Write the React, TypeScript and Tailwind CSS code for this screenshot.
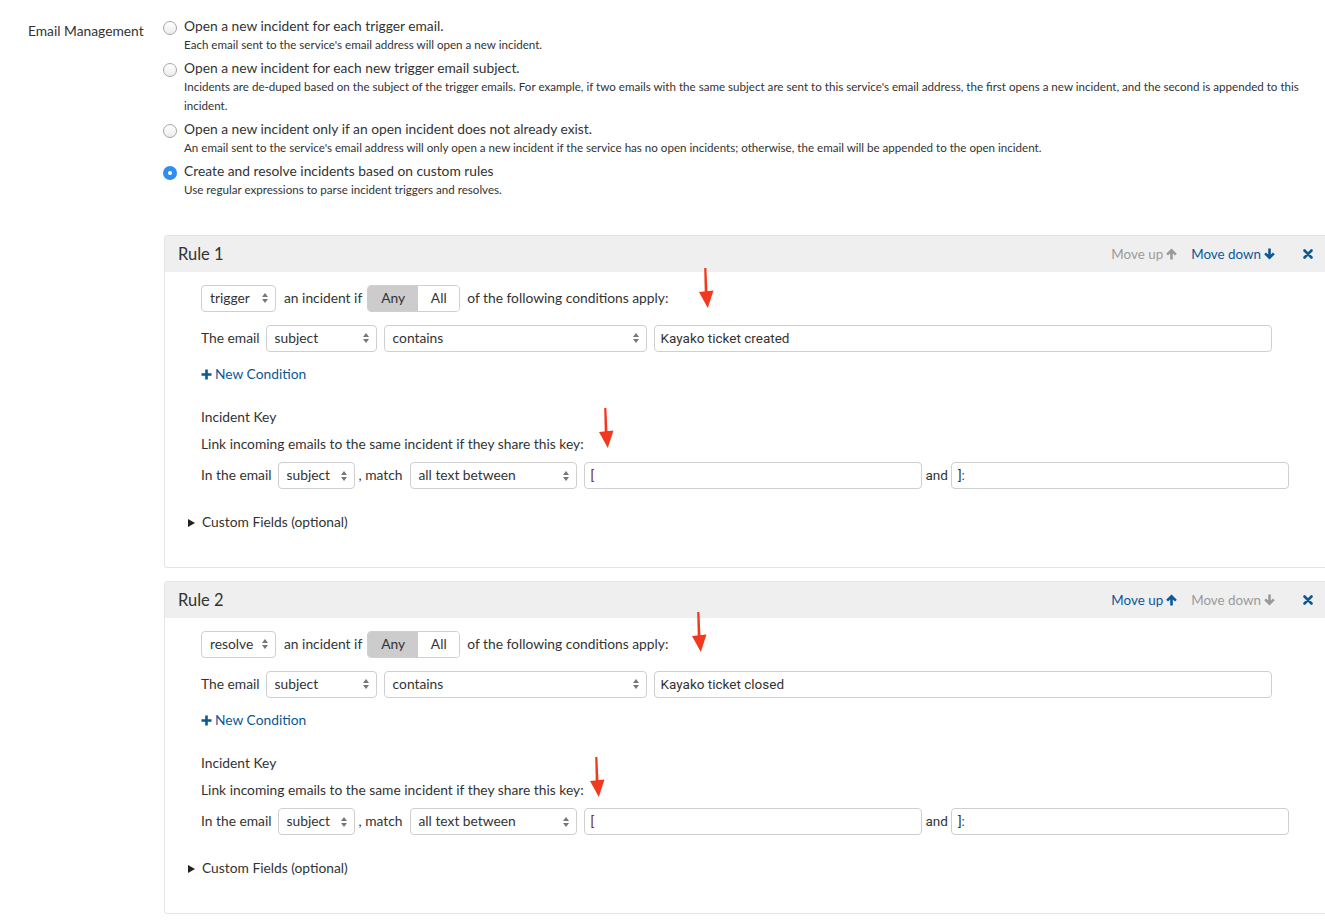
const options = [
  {
    title: 'Open a new incident for each trigger email.',
    desc: "Each email sent to the service's email address will open a new incident.",
  },
  {
    title: 'Open a new incident for each new trigger email subject.',
    desc: "Incidents are de-duped based on the subject of the trigger emails. For example, if two emails with the same subject are sent to this service's email address, the first opens a new incident, and the second is appended to this incident.",
  },
  {
    title: 'Open a new incident only if an open incident does not already exist.',
    desc: "An email sent to the service's email address will only open a new incident if the service has no open incidents; otherwise, the email will be appended to the open incident.",
  },
  {
    title: 'Create and resolve incidents based on custom rules',
    desc: 'Use regular expressions to parse incident triggers and resolves.',
    checked: true,
  },
];

const ArrowUp = () => (
  <svg width="11" height="12" viewBox="0 0 11 12" className="shrink-0">
    <path d="M5.5 0.5 L10.8 5.8 L9 7.6 L6.8 5.4 V11.5 H4.2 V5.4 L2 7.6 L0.2 5.8 Z" fill="currentColor" />
  </svg>
);

const ArrowDown = () => (
  <svg width="11" height="12" viewBox="0 0 11 12" className="shrink-0">
    <path d="M5.5 11.5 L10.8 6.2 L9 4.4 L6.8 6.6 V0.5 H4.2 V6.6 L2 4.4 L0.2 6.2 Z" fill="currentColor" />
  </svg>
);

const Cross = () => (
  <svg width="10" height="10" viewBox="0 0 10 10" className="shrink-0">
    <path d="M1.5 1.5 L8.5 8.5 M8.5 1.5 L1.5 8.5" stroke="currentColor" strokeWidth="2.6" strokeLinecap="round" />
  </svg>
);

const Plus = () => (
  <svg width="11" height="11" viewBox="0 0 11 11" className="shrink-0">
    <path d="M5.5 0.5 V10.5 M0.5 5.5 H10.5" stroke="currentColor" strokeWidth="2.6" />
  </svg>
);

const Radio = ({ checked }: { checked?: boolean }) =>
  checked ? (
    <span className="mt-[5px] flex h-[14px] w-[14px] shrink-0 items-center justify-center rounded-full bg-[#2f8ef3]">
      <span className="h-[4px] w-[4px] rounded-full bg-white" />
    </span>
  ) : (
    <span className="mt-[5px] h-[14px] w-[14px] shrink-0 rounded-full border border-[#a6a6a6] bg-gradient-to-b from-white to-[#ececec]" />
  );

const Select = ({ value, width }: { value: string; width: string }) => (
  <div className={`flex h-[27px] shrink-0 items-center justify-between rounded-[4px] border border-[#cfcfcf] bg-white pl-[8px] pr-[7px] ${width}`}>
    <span>{value}</span>
    <span className="flex flex-col items-center gap-[2px]">
      <span className="h-0 w-0 border-x-[3px] border-b-[4px] border-x-transparent border-b-[#777]" />
      <span className="h-0 w-0 border-x-[3px] border-t-[4px] border-x-transparent border-t-[#777]" />
    </span>
  </div>
);

const TextInput = ({ value, width, red }: { value: string; width: string; red?: boolean }) => (
  <div
    className={`flex h-[27px] shrink-0 items-center rounded-[4px] border border-[#cfcfcf] bg-white px-[6px] text-[13.5px] ${width} ${red ? 'text-[#7a3322]' : 'text-[#333]'}`}
    style={{ fontFamily: 'Roboto, "Liberation Sans", sans-serif' }}
  >
    {value}
  </div>
);

const Rule = ({
  n,
  verb,
  value,
  upActive,
  downActive,
}: {
  n: number;
  verb: string;
  value: string;
  upActive: boolean;
  downActive: boolean;
}) => (
  <div className="rounded-[3px] border border-[#e4e4e4] bg-white">
    <div className="flex h-[36px] items-center bg-[#efefef] pl-[13px] pr-[14px]">
      <span className="text-[16.5px] text-[#333]">Rule {n}</span>
      <div className="ml-auto flex items-center text-[13.4px]">
        <span className={`flex items-center gap-[3px] ${upActive ? 'text-[#0b5897]' : 'text-[#9a9a9a]'}`}>
          Move up <ArrowUp />
        </span>
        <span className={`ml-[14px] flex items-center gap-[3px] ${downActive ? 'text-[#0b5897]' : 'text-[#9a9a9a]'}`}>
          Move down <ArrowDown />
        </span>
        <span className="ml-[28px] text-[#0b5897]">
          <Cross />
        </span>
      </div>
    </div>
    <div className="pb-[35px] pl-[36px] pt-[12px] text-[13.8px] text-[#333]">
      <div className="flex h-[28px] items-center">
        <Select value={verb} width="w-[75px]" />
        <span className="ml-[8px]">an incident if</span>
        <div className="ml-[5px] flex h-[27px] overflow-hidden rounded-[4px] border border-[#cfcfcf]">
          <span className="flex w-[50px] items-center justify-center bg-[#cccccc]">Any</span>
          <span className="flex w-[41px] items-center justify-center bg-white">All</span>
        </div>
        <span className="ml-[7px]">of the following conditions apply:</span>
      </div>
      <div className="mt-[12px] flex h-[28px] items-center">
        <span>The email</span>
        <div className="ml-[6px]">
          <Select value="subject" width="w-[111px]" />
        </div>
        <div className="ml-[7px]">
          <Select value="contains" width="w-[263px]" />
        </div>
        <div className="ml-[7px]">
          <TextInput value={value} width="w-[618px]" />
        </div>
      </div>
      <div className="mt-[13px] flex h-[19px] items-center text-[#0b5897]">
        <Plus />
        <span className="ml-[3px]">New Condition</span>
      </div>
      <div className="mt-[23px] leading-[19px]">Incident Key</div>
      <div className="mt-[8px] leading-[19px]">Link incoming emails to the same incident if they share this key:</div>
      <div className="mt-[9px] flex h-[27px] items-center">
        <span>In the email</span>
        <div className="ml-[6px]">
          <Select value="subject" width="w-[77px]" />
        </div>
        <span className="ml-[4px]">, match</span>
        <div className="ml-[7px]">
          <Select value="all text between" width="w-[167px]" />
        </div>
        <div className="ml-[7px]">
          <TextInput value="[" width="w-[338px]" red />
        </div>
        <span className="ml-[4px] text-[13.5px]" style={{ fontFamily: 'Roboto, "Liberation Sans", sans-serif' }}>
          and
        </span>
        <div className="ml-[3px]">
          <TextInput value="]:" width="w-[338px]" />
        </div>
      </div>
      <div className="-ml-[13px] mt-[24px] flex h-[19px] items-center">
        <span className="h-0 w-0 border-y-[4px] border-l-[7px] border-y-transparent border-l-[#222]" />
        <span className="ml-[7px]">Custom Fields (optional)</span>
      </div>
    </div>
  </div>
);

const RedArrow = ({ left, top }: { left: string; top: string }) => (
  <svg className={`absolute ${left} ${top}`} width="22" height="42" viewBox="0 0 22 42">
    <path d="M9.2 1 L11.4 1 L12.6 28 L9.8 28 Z" fill="#f2381d" />
    <path d="M4 25 L18.5 23.5 L12.8 41 Z" fill="#f2381d" />
  </svg>
);

export default function App() {
  return (
    <div
      className="relative h-[924px] w-[1325px] overflow-hidden bg-white text-[#333]"
      style={{ fontFamily: 'Lato, "Open Sans", sans-serif' }}
    >
      <div className="flex pt-[16px]">
        <div className="w-[163px] shrink-0 pl-[28px] pt-[5px] text-[13.8px] leading-[19px]">Email Management</div>
        <div className="flex-1 pr-[16px]">
          {options.map((o) => (
            <div key={o.title} className="mb-[4px] flex">
              <Radio checked={o.checked} />
              <div className="ml-[7px]">
                <div className="text-[13.8px] leading-[19px]">{o.title}</div>
                <div className="text-[11.6px] leading-[19px]">{o.desc}</div>
              </div>
            </div>
          ))}
        </div>
      </div>

      <div className="-mr-[3px] ml-[164px] mt-[32px] space-y-[13px]">
        <Rule n={1} verb="trigger" value="Kayako ticket created" upActive={false} downActive />
        <Rule n={2} verb="resolve" value="Kayako ticket closed" upActive downActive={false} />
      </div>

      <RedArrow left="left-[695px]" top="top-[267px]" />
      <RedArrow left="left-[595px]" top="top-[407px]" />
      <RedArrow left="left-[688px]" top="top-[611px]" />
      <RedArrow left="left-[586px]" top="top-[756px]" />
    </div>
  );
}
